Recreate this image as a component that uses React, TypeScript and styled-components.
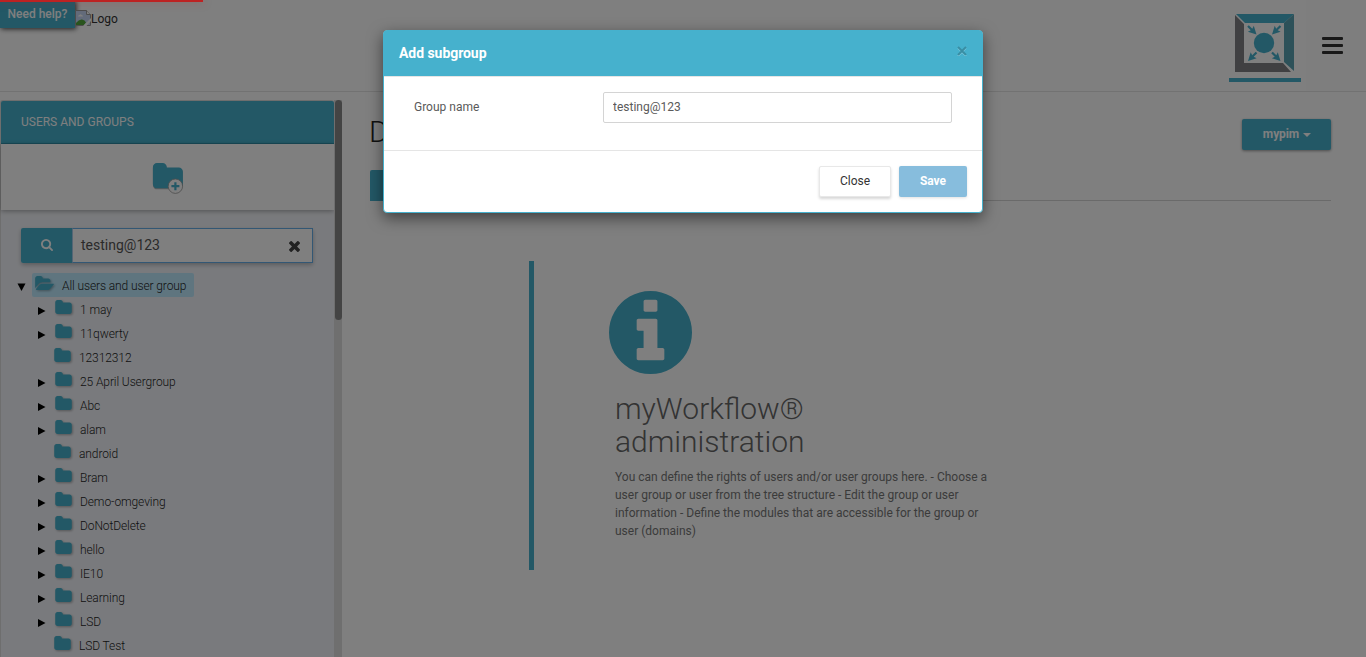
import React from "react";
import styled, { createGlobalStyle } from "styled-components";

const TEAL = "#46b1cd";

const GlobalStyle = createGlobalStyle`
  *, *::before, *::after { box-sizing: border-box; }
  html, body { margin: 0; height: 100%; overflow: hidden; }
  body {
    background: #fff;
    color: #5a5a5a;
    font-family: Roboto, "Liberation Sans", sans-serif;
    font-size: 12px;
    line-height: 18px;
  }
  h1, h2, p, ul { margin: 0; padding: 0; }
  ul { list-style: none; }
  svg { display: block; flex: none; }
  button, input { font-family: inherit; }
`;

const Page = styled.div`
  height: 657px;
  display: flex;
  flex-direction: column;
  overflow: hidden;
`;

const TopBar = styled.header`
  height: 92px;
  flex: none;
  display: flex;
  align-items: flex-start;
  border-bottom: 1px solid #e4e4e4;
`;

const HelpButton = styled.button`
  width: 75px;
  height: 28px;
  padding: 0 0 1px;
  border: 0;
  background: ${TEAL};
  color: #fff;
  font-size: 12px;
  font-weight: 500;
  box-shadow: 1px 1px 5px rgba(0, 0, 0, 0.75);
`;

const BrokenLogo = styled.div`
  display: flex;
  align-items: center;
  height: 16px;
  margin-top: 10px;
  color: #333;
  span { margin-top: 2px; }
`;

const TopRight = styled.div`
  margin-left: auto;
  display: flex;
  height: 91px;
`;

const ModuleTab = styled.div`
  width: 72px;
  height: 82px;
  margin-right: 5px;
  padding: 13px 0 0 5px;
  border-bottom: 4px solid ${TEAL};
`;

const MenuButton = styled.div`
  width: 60px;
  padding: 37px 0 0 16px;
  background: #fcfcfc;
  display: flex;
  flex-direction: column;
  gap: 4px;
`;

const MenuLine = styled.span`
  width: 21px;
  height: 3px;
  border-radius: 1px;
  background: #333;
`;

const Columns = styled.div`
  flex: 1;
  min-height: 0;
  display: flex;
`;

const Sidebar = styled.aside`
  width: 342px;
  flex: none;
  margin-top: 8px;
  display: flex;
`;

const SidebarPanel = styled.div`
  width: 334px;
  border: 1px solid #dcdcdc;
  border-width: 1px 0 0 1px;
  border-radius: 3px 3px 0 0;
  background: #f3f5fa;
`;

const ScrollTrack = styled.div`
  width: 8px;
  padding-left: 1px;
  background: #dedede;
`;

const ScrollThumb = styled.div`
  height: 220px;
  border-radius: 4px;
  background: #888;
`;

const SidebarHeading = styled.h2`
  height: 43px;
  padding-left: 20px;
  border-bottom: 1px solid #3195b0;
  border-radius: 2px 2px 0 0;
  background: ${TEAL};
  color: #fff;
  font-size: 12px;
  font-weight: 400;
  line-height: 42px;
`;

const Toolbar = styled.div`
  height: 66px;
  padding: 18px 0 0 151px;
  background: #fff;
  box-shadow: 0 1px 5px rgba(0, 0, 0, 0.35);
`;

const SearchBox = styled.div`
  width: 292px;
  height: 35px;
  margin: 18px 0 0 20px;
  display: flex;
  border-radius: 2px;
  box-shadow: 0 2px 4px rgba(0, 0, 0, 0.25);
`;

const SearchButton = styled.span`
  width: 51px;
  display: flex;
  align-items: center;
  justify-content: center;
  background: ${TEAL};
  border-radius: 2px 0 0 2px;
  svg { margin-bottom: 1px; }
`;

const SearchField = styled.div`
  flex: 1;
  display: flex;
  align-items: center;
  justify-content: space-between;
  padding: 0 12px 1px 8px;
  border: 1px solid #66afe9;
  border-left-color: #a9cdea;
  background: #fff;
  color: #555;
  font-size: 14px;
  svg { margin-top: 3px; }
`;

const Tree = styled.ul`
  margin-top: 10px;
  color: #1e1e1e;
  font-weight: 300;
  letter-spacing: -0.1px;
`;

const TreeRow = styled.li<{ $level: number }>`
  height: 24px;
  display: flex;
  align-items: center;
  padding-left: ${(p) => (p.$level ? 36 : 15)}px;
`;

const Toggle = styled.span<{ $level: number }>`
  width: ${(p) => (p.$level ? 17 : 16)}px;
  height: 24px;
  display: flex;
  align-items: center;
  padding: ${(p) => (p.$level ? 4 : 3)}px 0 0 1px;
`;

const NodeLabel = styled.span<{ $selected?: boolean; $leaf?: boolean }>`
  height: 24px;
  display: flex;
  align-items: center;
  gap: 8px;
  padding: ${(p) => (p.$selected ? "0 8px 0 3px" : "0")};
  margin-left: ${(p) => (p.$selected ? 0 : p.$leaf ? 0 : 1)}px;
  border-radius: 2px;
  background: ${(p) => (p.$selected ? "#beebff" : "transparent")};
  span { padding-top: 2px; }
  svg {
    margin-bottom: 4px;
    filter: drop-shadow(1px 1px 1px rgba(0, 0, 0, 0.3));
  }
`;

const Content = styled.main`
  flex: 1;
  padding: 27px 35px 0 28px;
`;

const TitleRow = styled.div`
  height: 51px;
  display: flex;
  justify-content: space-between;
  align-items: flex-start;
`;

const Title = styled.h1`
  margin: -4px 0 0 -1px;
  color: #222;
  font-size: 30px;
  font-weight: 300;
  line-height: 33px;
`;

const AccountButton = styled.button`
  width: 89px;
  height: 31px;
  display: flex;
  align-items: center;
  justify-content: center;
  gap: 4px;
  padding: 0 0 1px 1px;
  border: 0;
  border-radius: 2px;
  background: ${TEAL};
  color: #fff;
  font-size: 12px;
  font-weight: 700;
  letter-spacing: -0.1px;
  box-shadow: 0 1px 3px rgba(0, 0, 0, 0.4);
`;

const Caret = styled.span`
  margin-top: 1px;
  border: 4px solid transparent;
  border-top-color: #fff;
  border-bottom: 0;
`;

const Tabs = styled.div`
  height: 31px;
  border-bottom: 1px solid #d5d5d5;
`;

const ActiveTab = styled.div`
  width: 90px;
  height: 31px;
  background: ${TEAL};
  border-radius: 2px 2px 0 0;
`;

const InfoBlock = styled.section`
  width: 480px;
  height: 309px;
  margin: 60px 0 0 159px;
  padding: 30px 0 0 81px;
  border-left: 5px solid ${TEAL};
  svg { margin-left: -6px; }
`;

const InfoTitle = styled.h2`
  margin-top: 18px;
  color: #666;
  font-size: 30px;
  font-weight: 300;
  line-height: 33px;
  width: 240px;
`;

const InfoText = styled.p`
  width: 378px;
  margin-top: 10px;
  color: #777;
`;

const Backdrop = styled.div`
  position: absolute;
  inset: 0;
  background: rgba(0, 0, 0, 0.5);
  display: flex;
  justify-content: center;
  align-items: flex-start;
  padding-top: 30px;
`;

const Progress = styled.div`
  position: absolute;
  top: 0;
  left: 0;
  width: 203px;
  height: 2px;
  background: #bd2222;
  box-shadow: 0 0 8px rgba(190, 34, 34, 0.5);
`;

const Dialog = styled.div`
  width: 600px;
  height: 183px;
  border: 1px solid ${TEAL};
  border-radius: 4px;
  background: #fff;
  box-shadow: 0 5px 15px rgba(0, 0, 0, 0.5);
`;

const DialogHeader = styled.div`
  height: 46px;
  display: flex;
  align-items: center;
  justify-content: space-between;
  padding: 0 15px 2px;
  border-bottom: 1px solid #e5e5e5;
  background: ${TEAL};
  color: #fff;
  font-size: 14px;
  font-weight: 700;
  letter-spacing: -0.05px;
`;

const DialogBody = styled.div`
  height: 74px;
  display: flex;
  align-items: flex-start;
  padding: 15px 30px;
  border-bottom: 1px solid #e5e5e5;
`;

const FieldLabel = styled.label`
  width: 189px;
  padding-top: 6px;
`;

const FieldInput = styled.input`
  width: 349px;
  height: 31px;
  padding: 0 9px 2px;
  border: 1px solid #d4d4d4;
  border-radius: 2px;
  outline: 0;
  color: #5a5a5a;
  font-size: 12px;
`;

const DialogFooter = styled.div`
  display: flex;
  justify-content: flex-end;
  gap: 8px;
  padding: 15px;
`;

const DialogButton = styled.button<{ $primary?: boolean }>`
  width: ${(p) => (p.$primary ? 68 : 72)}px;
  height: 31px;
  padding: 0 0 1px;
  border: ${(p) => (p.$primary ? "0" : "1px solid #e8e8e8")};
  border-radius: 2px;
  background: ${(p) => (p.$primary ? "#87bddd" : "#fff")};
  color: ${(p) => (p.$primary ? "#fff" : "#333")};
  font-size: 12px;
  font-weight: ${(p) => (p.$primary ? 700 : 400)};
  box-shadow: 0 ${(p) => (p.$primary ? "1px 3px" : "2px 3px")} rgba(0, 0, 0, ${(p) => (p.$primary ? 0.12 : 0.16)});
`;

const FOLDER =
  "M1728 608v704q0 92-66 158t-158 66h-1216q-92 0-158-66t-66-158v-960q0-92 66-158t158-66h320q92 0 158 66t66 158v32h672q92 0 158 66t66 158z";
const FOLDER_OPEN =
  "M1879 952q0 31-31 66l-336 396q-43 51-120.5 86.5t-143.5 35.5h-1088q-34 0-60.5-13t-26.5-43q0-31 31-66l336-396q43-51 120.5-86.5t143.5-35.5h1088q34 0 60.5 13t26.5 43zm-343-344v160h-832q-94 0-197 47.5t-164 119.5l-337 396-5 6q0-4-.5-12.5t-.5-12.5v-960q0-92 66-158t158-66h320q92 0 158 66t66 158v32h544q92 0 158 66t66 158z";
const SEARCH =
  "M1216 832q0-185-131.5-316.5t-316.5-131.5-316.5 131.5-131.5 316.5 131.5 316.5 316.5 131.5 316.5-131.5 131.5-316.5zm512 832q0 52-38 90t-90 38q-54 0-90-38l-343-342q-179 124-399 124-143 0-273.5-55.5t-225-150-150-225-55.5-273.5 55.5-273.5 150-225 225-150 273.5-55.5 273.5 55.5 225 150 150 225 55.5 273.5q0 220-124 399l343 343q37 37 37 90z";
const TIMES =
  "M1490 1322q0 40-28 68l-136 136q-28 28-68 28t-68-28l-294-294-294 294q-28 28-68 28t-68-28l-136-136q-28-28-28-68t28-68l294-294-294-294q-28-28-28-68t28-68l136-136q28-28 68-28t68 28l294 294 294-294q28-28 68-28t68 28l136 136q28 28 28 68t-28 68l-294 294 294 294q28 28 28 68z";
const INFO =
  "M1152 1376v-160q0-14-9-23t-23-9h-96v-512q0-14-9-23t-23-9h-320q-14 0-23 9t-9 23v160q0 14 9 23t23 9h96v320h-96q-14 0-23 9t-9 23v160q0 14 9 23t23 9h448q14 0 23-9t9-23zm-128-896v-160q0-14-9-23t-23-9h-192q-14 0-23 9t-9 23v160q0 14 9 23t23 9h192q14 0 23-9t9-23zm640 416q0 209-103 385.5t-279.5 279.5-385.5 103-385.5-103-279.5-279.5-103-385.5 103-385.5 279.5-279.5 385.5-103 385.5 103 279.5 279.5 103 385.5z";

type IconProps = { d: string; box: string; w: number; h: number; color?: string };
const Icon = ({ d, box, w, h, color = TEAL }: IconProps) => (
  <svg width={w} height={h} viewBox={box} fill={color}>
    <path d={d} />
  </svg>
);

const BrokenImage = () => (
  <svg width="16" height="16" viewBox="0 0 16 16">
    <path d="M.5.5h11l4 4v11H.5z" fill="#c6d6f5" stroke="#9a9a9a" />
    <path d="M11.5.5v4h4" fill="#fff" stroke="#9a9a9a" />
    <path d="M3 6.500q0-1.500 1.500-1.500 1-1.500 2.200 0 1.300 0 1.300 1.500z" fill="#fff" />
    <path d="M1 15v-2q3-4 6-3.500t4 3l-2 2.500z" fill="#52a83a" />
    <path d="M8 16l8-8v3l-4.500 5z" fill="#fff" />
  </svg>
);

const AddFolder = () => (
  <svg width="36" height="36" viewBox="0 0 36 36">
    <g transform="translate(-0.250 -1.300) scale(0.018)" style={{ filter: "drop-shadow(0 50px 40px rgba(0,0,0,.3))" }}>
      <path d={FOLDER} fill={TEAL} />
    </g>
    <circle cx="23.400" cy="24.200" r="7.200" fill="#fff" stroke="#999" strokeWidth="0.800" />
    <path d="M23.400 20.200v8M19.400 24.200h8" stroke={TEAL} strokeWidth="2.200" />
  </svg>
);

const ModuleLogo = () => (
  <svg width="61" height="61" viewBox="0 0 61 61">
    <path d="M2 1h58l-10 9H11z" fill={TEAL} />
    <path d="M60 1v57l-10-9V10z" fill="#5aa3b3" />
    <path d="M1 2l9 9v39h39l8 9H1z" fill="#808084" />
    <circle cx="30" cy="30" r="10.200" fill={TEAL} />
    {[
      "translate(14 13) rotate(45)",
      "translate(46.500 13) rotate(135)",
      "translate(22.500 39.500) rotate(135)",
      "translate(38 39.500) rotate(45)",
    ].map((t) => (
      <path key={t} d="M0-1.100h5L4-4.200l8 4.200-8 4.200L5 1.100H0z" transform={t} fill={TEAL} />
    ))}
  </svg>
);

const groups: { name: string; leaf?: boolean }[] = [
  { name: "1 may" },
  { name: "11qwerty" },
  { name: "12312312", leaf: true },
  { name: "25 April Usergroup" },
  { name: "Abc" },
  { name: "alam" },
  { name: "android", leaf: true },
  { name: "Bram" },
  { name: "Demo-omgeving" },
  { name: "DoNotDelete" },
  { name: "hello" },
  { name: "IE10" },
  { name: "Learning" },
  { name: "LSD" },
  { name: "LSD Test", leaf: true },
];

export default function App() {
  return (
    <>
      <GlobalStyle />
      <Page>
        <TopBar>
          <HelpButton>Need help?</HelpButton>
          <BrokenLogo>
            <BrokenImage />
            <span>Logo</span>
          </BrokenLogo>
          <TopRight>
            <ModuleTab>
              <ModuleLogo />
            </ModuleTab>
            <MenuButton>
              <MenuLine />
              <MenuLine />
              <MenuLine />
            </MenuButton>
          </TopRight>
        </TopBar>
        <Columns>
          <Sidebar>
            <SidebarPanel>
              <SidebarHeading>USERS AND GROUPS</SidebarHeading>
              <Toolbar>
                <AddFolder />
              </Toolbar>
              <SearchBox>
                <SearchButton>
                  <Icon d={SEARCH} box="64 128 1664 1664" w={12} h={12} color="#fff" />
                </SearchButton>
                <SearchField>
                  <span>testing@123</span>
                  <Icon d={TIMES} box="302 366 1188 1188" w={11} h={11} color="#444" />
                </SearchField>
              </SearchBox>
              <Tree>
                <TreeRow $level={0}>
                  <Toggle $level={0}>
                    <svg width="9" height="8" viewBox="0 0 9 8">
                      <path d="M.5.5h8l-4 7.500z" />
                    </svg>
                  </Toggle>
                  <NodeLabel $selected>
                    <Icon d={FOLDER_OPEN} box="0 128 1879 1408" w={19} h={14} />
                    <span>All users and user group</span>
                  </NodeLabel>
                </TreeRow>
                {groups.map((g) => (
                  <TreeRow key={g.name} $level={1}>
                    <Toggle $level={1}>
                      {!g.leaf && (
                        <svg width="8" height="8" viewBox="0 0 8 8">
                          <path d="M0 0l7.500 4L0 8z" />
                        </svg>
                      )}
                    </Toggle>
                    <NodeLabel $leaf={g.leaf}>
                      <Icon d={FOLDER} box="64 128 1664 1408" w={17} h={14} />
                      <span>{g.name}</span>
                    </NodeLabel>
                  </TreeRow>
                ))}
              </Tree>
            </SidebarPanel>
            <ScrollTrack>
              <ScrollThumb />
            </ScrollTrack>
          </Sidebar>
          <Content>
            <TitleRow>
              <Title>Domains</Title>
              <AccountButton>
                mypim <Caret />
              </AccountButton>
            </TitleRow>
            <Tabs>
              <ActiveTab />
            </Tabs>
            <InfoBlock>
              <Icon d={INFO} box="128 128 1536 1536" w={83} h={83} />
              <InfoTitle>myWorkflow® administration</InfoTitle>
              <InfoText>
                You can define the rights of users and/or user groups here. - Choose a user group or user from the tree
                structure - Edit the group or user information - Define the modules that are accessible for the group or
                user (domains)
              </InfoText>
            </InfoBlock>
          </Content>
        </Columns>
      </Page>
      <Backdrop>
        <Dialog>
          <DialogHeader>
            <span>Add subgroup</span>
            <svg width="10" height="10" viewBox="0 0 10 10" style={{ marginTop: -3 }}>
              <path d="M1 2l8 8M9 2l-8 8" stroke="#8fd0e2" strokeWidth="1.500" />
              <path d="M1 1l8 8M9 1l-8 8" stroke="#388ea4" strokeWidth="2" />
            </svg>
          </DialogHeader>
          <DialogBody>
            <FieldLabel htmlFor="group-name">Group name</FieldLabel>
            <FieldInput id="group-name" defaultValue="testing@123" />
          </DialogBody>
          <DialogFooter>
            <DialogButton>Close</DialogButton>
            <DialogButton $primary>Save</DialogButton>
          </DialogFooter>
        </Dialog>
      </Backdrop>
      <Progress />
    </>
  );
}
